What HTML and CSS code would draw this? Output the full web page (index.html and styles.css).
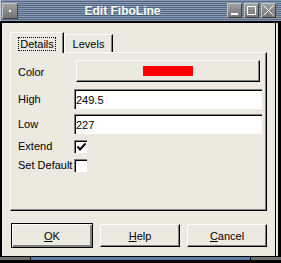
FILE: index.html
```html
<!DOCTYPE html>
<html lang="en">
<head>
  <meta charset="utf-8">
  <title>Edit FiboLine</title>
  <link rel="stylesheet" href="styles.css">
</head>
<body>
  <div class="window">
    <!-- Title bar -->
    <div class="titlebar">
      <span class="tb-btn menu-btn"><span class="dot"></span></span>
      <span class="title">Edit FiboLine</span>
      <span class="tb-controls">
        <span class="tb-btn">
          <svg width="13" height="13" viewBox="0 0 13 13"><rect x="3" y="9" width="7" height="2" fill="#fff"/></svg>
        </span>
        <span class="tb-btn">
          <svg width="13" height="13" viewBox="0 0 13 13"><rect x="2.5" y="2.5" width="8" height="8" fill="none" stroke="#fff"/></svg>
        </span>
        <span class="tb-btn">
          <svg width="13" height="13" viewBox="0 0 13 13"><path d="M1.5 1.5 L11.5 11.5 M11.5 1.5 L1.5 11.5" stroke="#fff" stroke-width="1"/></svg>
        </span>
      </span>
    </div>

    <div class="body">
      <div class="tabs">
        <div class="tab active"><span class="focus">Details</span></div>
        <div class="tab">Levels</div>
      </div>

      <div class="panel">
        <div class="form">
          <span class="label">Color</span>
          <div class="field"><div class="color-btn"><span class="swatch"></span></div></div>

          <span class="label">High</span>
          <div class="field"><div class="text-input">249.5</div></div>

          <span class="label">Low</span>
          <div class="field"><div class="text-input">227</div></div>

          <span class="label">Extend</span>
          <div class="field">
            <span class="checkbox">
              <svg width="11" height="11" viewBox="0 0 11 11"><path d="M1.5 4.5 L4 7.5 L9.5 1.5" fill="none" stroke="#000" stroke-width="2"/></svg>
            </span>
          </div>

          <span class="label">Set Default</span>
          <div class="field"><span class="checkbox"></span></div>
        </div>
      </div>

      <div class="actions">
        <button class="btn btn-default"><u>O</u>K</button>
        <button class="btn"><u>H</u>elp</button>
        <button class="btn"><u>C</u>ancel</button>
      </div>
    </div>

    <div class="resize">
      <span class="grip"></span>
      <span class="grip-mid"></span>
      <span class="grip"></span>
    </div>
  </div>
</body>
</html>
```

FILE: styles.css
```css
body {
  margin: 0;
  font-family: "Liberation Sans", Arial, sans-serif;
  font-size: 11px;
  color: #000;
}

.window {
  width: 281px;
  height: 263px;
  display: flex;
  flex-direction: column;
  background: #000;
}

/* Title bar */
.titlebar {
  height: 21px;
  flex: none;
  display: flex;
  align-items: center;
  border-left: 1px solid #c8ccd2;
  background: repeating-linear-gradient(to bottom, #8799b1 0 1px, #566a86 1px 2px);
}

.tb-btn {
  width: 15px;
  height: 15px;
  display: flex;
  align-items: center;
  justify-content: center;
  background: linear-gradient(#a0a0a0, #747474);
  border: 1px solid;
  border-color: #c4c4c4 #404040 #404040 #c4c4c4;
  box-sizing: border-box;
}

.menu-btn {
  width: 16px;
  height: 16px;
  margin-left: 1px;
}

.dot {
  width: 2px;
  height: 2px;
  background: #fff;
}

.title {
  flex: 1;
  text-align: center;
  color: #fff;
  font-weight: bold;
  font-size: 12px;
  text-shadow: 0 1px 0 #3a4a60;
}

.tb-controls {
  display: flex;
  gap: 2px;
  margin-right: 5px;
}

/* Dialog body */
.body {
  flex: 1;
  margin: 2px 0 0 1px;
  background: #ece9e1;
  border-left: 1px solid #000;
  border-right: 1px solid #000;
  box-shadow: 2px 0 0 #e8e8e8;
  width: 275px;
  padding: 9px 8px 0 8px;
  box-sizing: border-box;
}

.tabs {
  display: flex;
  align-items: flex-end;
  height: 20px;
}

.tab {
  height: 18px;
  box-sizing: border-box;
  border-top: 1px solid #fff;
  border-left: 1px solid #fff;
  border-right: 1px solid #000;
  border-top-left-radius: 2px;
  box-shadow: inset -1px 0 0 #808080;
  display: flex;
  align-items: center;
  justify-content: center;
  width: 49px;
  background: #ece9e1;
}

.tab.active {
  width: 54px;
  height: 21px;
  margin-bottom: -1px;
  position: relative;
  z-index: 1;
  padding-top: 1px;
}

.focus {
  outline: 1px dotted #000;
  padding: 0 1px;
  line-height: 12px;
}

.panel {
  height: 159px;
  box-sizing: border-box;
  border: 1px solid;
  border-color: #fff #000 #000 #fff;
  box-shadow: inset -1px -1px 0 #808080;
  padding: 6px 0 0 7px;
}

.form {
  display: grid;
  grid-template-columns: 56px 188px;
  grid-template-rows: 25px 20px 20px 14px 14px;
  row-gap: 5px;
  align-items: center;
}

.field {
  height: 100%;
  display: flex;
  align-items: center;
}

.color-btn {
  margin: 1px 2px 0 2px;
  flex: 1;
  height: 22px;
  align-self: flex-start;
  box-sizing: border-box;
  border: 1px solid;
  border-color: #fff #000 #000 #fff;
  box-shadow: inset -1px -1px 0 #808080;
  display: flex;
  align-items: center;
  justify-content: center;
}

.swatch {
  width: 50px;
  height: 10px;
  background: #ff0000;
}

.text-input {
  flex: 1;
  height: 20px;
  box-sizing: border-box;
  background: #fff;
  border-top: 1px solid #808080;
  border-left: 1px solid #808080;
  box-shadow: inset 1px 1px 0 #000;
  padding: 2px 0 0 1px;
  line-height: 16px;
}

.checkbox {
  width: 13px;
  height: 13px;
  box-sizing: border-box;
  background: #fff;
  border-top: 1px solid #808080;
  border-left: 1px solid #808080;
  box-shadow: inset 1px 1px 0 #000;
  display: flex;
  align-items: center;
  justify-content: center;
  padding: 1px 0 0 1px;
}

.actions {
  display: flex;
  justify-content: space-between;
  align-items: center;
  margin: 12px 0 0 1px;
  height: 25px;
}

.btn {
  width: 80px;
  height: 23px;
  margin: 0;
  padding: 0;
  font: inherit;
  color: #000;
  background: #ece9e1;
  border: 1px solid;
  border-color: #fff #000 #000 #fff;
  box-shadow: inset -1px -1px 0 #808080;
}

.btn-default {
  width: 82px;
  height: 25px;
  border-color: #000;
  box-shadow: inset 1px 1px 0 #fff, inset -2px -2px 0 #808080;
}

/* Bottom resize border */
.resize {
  height: 7px;
  flex: none;
  display: flex;
  box-sizing: border-box;
  border-top: 1px solid #000;
  border-bottom: 3px solid #000;
}

.grip {
  width: 30px;
  background: #6e6e6e;
  border-right: 1px solid #000;
}

.grip:last-child {
  border-right: none;
  border-left: 1px solid #000;
}

.grip-mid {
  flex: 1;
  background: #5d7ea8;
}
```
